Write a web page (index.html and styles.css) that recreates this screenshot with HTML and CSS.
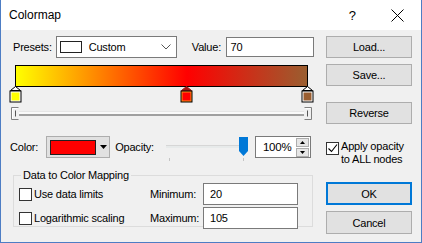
FILE: index.html
```html
<!DOCTYPE html>
<html>
<head>
<meta charset="utf-8">
<link rel="stylesheet" href="styles.css">
</head>
<body>
<div class="dialog">
  <div class="titlebar">
    <span class="title">Colormap</span>
    <span class="tb-help">?</span>
    <span class="tb-close"><svg width="13" height="13" viewBox="0 0 13 13"><path d="M0.5 0.5 L12.5 12.5 M12.5 0.5 L0.5 12.5" stroke="#000" stroke-width="1" fill="none"/></svg></span>
  </div>
  <div class="content">
    <div class="left">
      <div class="row1">
        <span class="lbl presets-lbl">Presets:</span>
        <div class="combo">
          <span class="combo-swatch"></span>
          <span class="combo-text">Custom</span>
          <svg class="chev" width="10" height="6" viewBox="0 0 10 6"><path d="M0.5 0.5 L5 5 L9.5 0.5" stroke="#555" fill="none"/></svg>
        </div>
        <span class="lbl value-lbl">Value:</span>
        <div class="textbox value-box">70</div>
      </div>

      <div class="bar"></div>
      <div class="markers">
        <svg class="marker" style="left:-1px" width="13" height="17" viewBox="0 0 13 17"><path d="M6.5 0.5 L11.5 4.5 L1.5 4.5 Z" fill="#fff" stroke="#000"/><rect x="0.5" y="4.5" width="12" height="12" fill="#000"/><rect x="1.5" y="5.5" width="10" height="10" fill="#fff"/><rect x="2.5" y="6.5" width="8" height="8" fill="#ffff00"/></svg>
        <svg class="marker" style="left:170px" width="13" height="17" viewBox="0 0 13 17"><path d="M6.5 0.5 L11.5 4.5 L1.5 4.5 Z" fill="#a51616" stroke="#a51616"/><rect x="0.5" y="4.5" width="12" height="12" fill="#000"/><rect x="1.5" y="5.5" width="10" height="10" fill="#ff8c1a"/><rect x="2.5" y="6.5" width="8" height="8" fill="#ff0000"/></svg>
        <svg class="marker" style="left:291px" width="13" height="17" viewBox="0 0 13 17"><path d="M6.5 0.5 L11.5 4.5 L1.5 4.5 Z" fill="#fff" stroke="#000"/><rect x="0.5" y="4.5" width="12" height="12" fill="#000"/><rect x="1.5" y="5.5" width="10" height="10" fill="#fff"/><rect x="2.5" y="6.5" width="8" height="8" fill="#9a5e30"/></svg>
      </div>
      <div class="range">
        <svg class="rthumb rthumb-l" width="8" height="13" viewBox="0 0 8 13"><path d="M7.5 0.5 H0.5 V12.5 H7.5" stroke="#808080" fill="none"/><path d="M6.5 1.5 H1.5 V11.5" stroke="#fff" fill="none"/><path d="M4.5 3.5 V9.5" stroke="#555" fill="none"/></svg>
        <div class="rtrack"></div>
        <svg class="rthumb rthumb-r" width="8" height="13" viewBox="0 0 8 13"><path d="M0.5 0.5 H7.5 V12.5 H0.5" stroke="#808080" fill="none"/><path d="M1.5 1.5 H6.5" stroke="#fff" fill="none"/><path d="M3.5 3.5 V9.5" stroke="#555" fill="none"/></svg>
      </div>

      <div class="row-color">
        <span class="lbl">Color:</span>
        <div class="colorbtn">
          <span class="color-swatch"></span>
          <svg class="cb-arrow" width="7" height="4" viewBox="0 0 7 4"><path d="M0 0 H7 L3.5 4 Z" fill="#000"/></svg>
        </div>
        <span class="lbl opacity-lbl">Opacity:</span>
        <div class="oslider">
          <div class="otrack"></div>
          <svg class="othumb" width="9" height="19" viewBox="0 0 9 19"><path d="M0 0 H9 V14 L4.5 19 L0 14 Z" fill="#0078d7"/></svg>
          <span class="otick otick-l"></span>
          <span class="otick otick-r"></span>
        </div>
        <div class="spin">
          <span class="spin-text">100%</span>
          <div class="spin-btns">
            <div class="spin-btn"><svg width="5" height="3" viewBox="0 0 5 3"><path d="M0 3 H5 L2.5 0 Z" fill="#000"/></svg></div>
            <div class="spin-btn"><svg width="5" height="3" viewBox="0 0 5 3"><path d="M0 0 H5 L2.5 3 Z" fill="#000"/></svg></div>
          </div>
        </div>
      </div>

      <fieldset class="group">
        <legend>Data to Color Mapping</legend>
        <div class="grow">
          <span class="chk"></span><span class="chk-lbl">Use data limits</span>
          <span class="lbl mm-lbl">Minimum:</span>
          <div class="textbox mm-box">20</div>
        </div>
        <div class="grow grow2">
          <span class="chk"></span><span class="chk-lbl">Logarithmic scaling</span>
          <span class="lbl mm-lbl">Maximum:</span>
          <div class="textbox mm-box">105</div>
        </div>
      </fieldset>
    </div>

    <div class="right">
      <div class="btn btn-load">Load...</div>
      <div class="btn btn-save">Save...</div>
      <div class="btn btn-rev">Reverse</div>
      <div class="apply">
        <span class="chk checked"><svg width="11" height="11" viewBox="0 0 11 11"><path d="M1.5 5.5 L4.5 8.5 L10 1.5" stroke="#000" stroke-width="1.1" fill="none"/></svg></span>
        <span class="apply-text">Apply opacity<br>to ALL nodes</span>
      </div>
      <div class="btn btn-ok">OK</div>
      <div class="btn btn-cancel">Cancel</div>
    </div>
  </div>
</div>
</body>
</html>
```

FILE: styles.css
```css
* { box-sizing: border-box; }
html, body { margin: 0; padding: 0; background: #f0f0f0; }
body {
  font-family: "Liberation Sans", Arial, sans-serif;
  font-size: 11px;
  letter-spacing: -0.2px;
  color: #000;
}
.dialog {
  width: 422px;
  height: 243px;
  border: 1px solid #4d7dc4;
  border-top: none;
  background: #f0f0f0;
  display: flex;
  flex-direction: column;
  overflow: hidden;
}
.titlebar {
  height: 30px;
  flex: none;
  background: #fff;
  display: flex;
  align-items: center;
  padding-left: 8px;
}
.title { font-size: 12px; letter-spacing: 0; }
.tb-help {
  font-size: 13px;
  margin-left: auto;
  margin-right: 35px;
  letter-spacing: 0;
}
.tb-close { display: flex; margin-right: 17px; }

.content {
  display: flex;
  padding: 6px 0 0 9px;
}
.left { width: 304px; flex: none; display: flex; flex-direction: column; }
.right { width: 86px; margin-left: 12px; display: flex; flex-direction: column; }

.lbl { white-space: nowrap; }
.row1 { height: 22px; display: flex; align-items: center; }
.presets-lbl { margin-left: 3px; width: 43px; }
.combo {
  width: 122px; height: 22px;
  background: #fff;
  border: 1px solid #7a7a7a;
  display: flex; align-items: center;
  padding-left: 3px;
}
.combo-swatch {
  width: 22px; height: 12px;
  border: 1px solid #222;
  background: #fff;
}
.combo-text { margin-left: 7px; }
.chev { margin-left: auto; margin-right: 5px; }
.value-lbl { margin-left: 15px; width: 34px; }
.textbox {
  background: #fff;
  border: 1px solid #7a7a7a;
  height: 20px;
  display: flex; align-items: center;
  padding-left: 4px;
}
.value-box { width: 89px; }

.bar {
  margin-top: 7px;
  margin-left: 5px;
  width: 293px;
  height: 22px;
  border: 1px solid #000;
  background: linear-gradient(to right, #ffff00 0%, #ff0000 58.8%, #9a5e30 100%);
}
.markers {
  position: relative;
  height: 17px;
  margin-top: -1px;
}
.marker { position: absolute; top: 0; left: 0; }
.range {
  margin-top: 4px;
  height: 13px;
  display: flex;
  align-items: flex-start;
  margin-left: 1px;
  width: 301px;
}
.rtrack {
  flex: 1;
  height: 5px;
  margin-top: 4px;
  background: #fafafa;
  border-top: 1px solid #e6e6e6;
  border-bottom: 2px solid #a0a0a0;
}

.row-color { margin-top: 16px; height: 22px; display: flex; align-items: center; }
.colorbtn {
  margin-left: 8px;
  width: 64px; height: 22px;
  background: #e1e1e1;
  border: 1px solid #adadad;
  display: flex; align-items: center;
  padding-left: 3px;
}
.color-swatch {
  width: 46px; height: 15px;
  background: #ff0000;
  border: 1px solid #202020;
}
.cb-arrow { margin-left: 4px; }
.opacity-lbl { margin-left: 5px; }
.oslider {
  position: relative;
  width: 95px; height: 22px;
  margin-left: 6px;
}
.otrack {
  position: absolute; left: 6px; right: 8px; top: 9px;
  height: 3px;
  background: #e7eaea;
  border-top: 1px solid #d6d6d6;
}
.othumb { position: absolute; left: 79px; top: 1px; }
.otick { position: absolute; top: 22px; width: 1px; height: 3px; background: #c4c4c4; }
.otick-l { left: 9px; }
.otick-r { left: 83px; }
.spin {
  width: 56px; height: 22px;
  background: #fff;
  border: 1px solid #7a7a7a;
  display: flex; align-items: center;
  padding-left: 7px;
}
.spin-text { font-size: 11.5px; }
.spin-btns { margin-left: auto; margin-right: 1px; display: flex; flex-direction: column; gap: 1px; }
.spin-btn {
  width: 13px; height: 9px;
  background: #e6e6e6;
  border: 1px solid #adadad;
  display: flex; align-items: center; justify-content: center;
}

.group {
  margin: 11px 0 0 3px;
  width: 300px;
  height: 58px;
  border: 1px solid #dcdcdc;
  padding: 2px 0 0 5px;
}
.group legend { padding: 0 2px; margin-left: 2px; line-height: 12px; }
.grow { display: flex; align-items: center; height: 22px; }
.grow2 { margin-top: 2px; }
.chk {
  width: 13px; height: 13px;
  border: 1px solid #333;
  background: #fff;
  display: inline-flex; align-items: center; justify-content: center;
  flex: none;
}
.chk-lbl { margin-left: 2px; width: 116px; }
.mm-lbl { width: 53px; }
.mm-box { width: 95px; height: 22px; padding-left: 6px; }

.btn {
  height: 22px;
  background: #e1e1e1;
  border: 1px solid #adadad;
  display: flex; align-items: center; justify-content: center;
}
.btn-save { margin-top: 6px; }
.btn-rev { margin-top: 16px; }
.apply { margin-top: 16px; display: flex; align-items: flex-start; }
.apply .chk { margin-top: 2px; }
.apply-text { margin-left: 2px; line-height: 13px; }
.btn-ok { margin-top: 16px; height: 23px; border: 2px solid #0078d7; }
.btn-cancel { margin-top: 6px; height: 23px; }
```
